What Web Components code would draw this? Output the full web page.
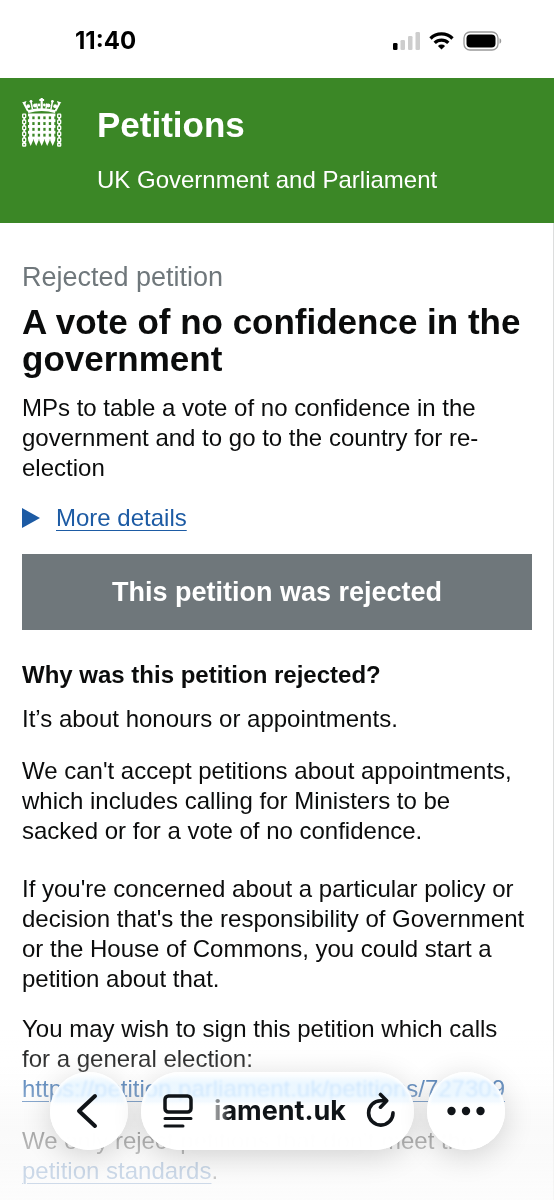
<!DOCTYPE html>
<html lang="en">
<head>
<meta charset="utf-8">
<meta name="viewport" content="width=device-width, initial-scale=1">
<title>A vote of no confidence in the government - Petitions</title>
<style>
  body {
    margin: 0;
    background: #fff;
    color: #0b0c0c;
    font: 24px/30px "Liberation Sans", Arial, sans-serif;
  }
</style>
</head>
<body>
<status-bar time="11:40"></status-bar>
<petition-header>
  <span slot="title">Petitions</span>
  <span slot="tagline">UK Government and Parliament</span>
</petition-header>
<petition-page>
  <span slot="status">Rejected petition</span>
  <span slot="title">A vote of no confidence in the government</span>
  <span slot="action">MPs to table a vote of no confidence in the government and to go to the country for re-election</span>
  <petition-details>More details</petition-details>
  <petition-banner>This petition was rejected</petition-banner>
  <rejection-reason></rejection-reason>
</petition-page>
<browser-toolbar><span>iament.uk</span></browser-toolbar>

<script>
class StatusBar extends HTMLElement {
    connectedCallback() {
        this.attachShadow({ mode: "open" }).innerHTML = `
        <style>
          :host {
            display: flex;
            align-items: center;
            justify-content: space-between;
            box-sizing: border-box;
            height: 78px;
            padding: 4px 52px 0 75px;
            color: #000;
            font: 700 24px/30px Inter, sans-serif;
          }
          .icons {
            display: flex;
            align-items: center;
            gap: 8px;
          }
          svg { display: block; }
        </style>
        <time>${this.getAttribute("time")}</time>
        <div class="icons">
          <svg width="29" height="18" viewBox="0 0 29 18" aria-label="Signal">
            <rect x="1" y="11" width="4.500" height="7" rx="1.300" fill="#000"/>
            <g fill="#cdcdcd">
              <rect x="8.500" y="8" width="4.500" height="10" rx="1.300"/>
              <rect x="16" y="4" width="4.500" height="14" rx="1.300"/>
              <rect x="23.500" y="0" width="4.500" height="18" rx="1.300"/>
            </g>
          </svg>
          <svg width="25" height="18" viewBox="0 0 25 18" fill="none" stroke="#000" stroke-width="3.300" aria-label="Wi-Fi">
            <path d="M1.500 6.500a15.500 15.500 0 0 1 22 0"/>
            <path d="M5.700 10.900a9.600 9.600 0 0 1 13.600 0"/>
            <path d="M12.500 17.500L8.900 13.900a5.200 5.200 0 0 1 7.200 0z" fill="#000" stroke="none"/>
          </svg>
          <svg width="40" height="20" viewBox="0 0 40 20" aria-label="Battery">
            <rect x="2" y="1" width="34" height="18" rx="6" fill="none" stroke="#999" stroke-width="1.300"/>
            <rect x="4.500" y="3.500" width="29" height="13" rx="4" fill="#000"/>
            <path d="M37.500 7.300c2.300.6 2.300 4.800 0 5.400z" fill="#999"/>
          </svg>
        </div>
        `;
    }
}

class PortcullisLogo extends HTMLElement {
    connectedCallback() {
        this.attachShadow({ mode: "open" }).innerHTML = `
        <style>
          :host { display: block; }
          svg { display: block; }
        </style>
        <svg width="40" height="49" viewBox="0 0 40 49" fill="none" stroke="#fff" role="img" aria-label="Portcullis">
          ${this._crown()}
          ${this._grille()}
          ${this._chain(2.2)}
          ${this._chain(37.2)}
        </svg>
        `;
    }
    _crown() {
        return `
          <path d="M6 13.700Q19.700 9.500 33.400 13.700" stroke-width="2.800"/>
          <path d="M6 13L1.800 5M33.400 13L37.600 5" stroke-width="1.900"/>
          <path d="M10.500 11.500L9 3.500M28.900 11.500L30.400 3.500" stroke-width="1.500"/>
          <path d="M15.500 10.800L14.500 5.500M23.900 10.800L24.900 5.500" stroke-width="1.500"/>
          <path d="M19.700 0v11" stroke-width="2.200"/>
          <path d="M17.300 2h4.800" stroke-width="2"/>
          <g fill="#fff" stroke="none">
            <path d="M0 4.500l4.500-1.500-1.500 4zM39.400 4.500l-4.500-1.500 1.500 4z"/>
            <circle cx="9" cy="3.300" r="1.400"/>
            <circle cx="30.400" cy="3.300" r="1.400"/>
            <circle cx="6.200" cy="8.200" r="1.900"/>
            <circle cx="33.200" cy="8.200" r="1.900"/>
            <circle cx="13" cy="7.500" r="2"/>
            <circle cx="26.400" cy="7.500" r="2"/>
            <circle cx="17" cy="7" r="1.400"/>
            <circle cx="22.400" cy="7" r="1.400"/>
          </g>`;
    }
    // five spiked uprights crossed by five bars
    _grille() {
        const uprights = [8.7, 14.2, 19.7, 25.2, 30.700].map(x =>
            `<path d="M${x - 1.6} 16h3.200v24l1 2-2.600 6-2.600-6 1-2z"/>`).join("");
        const bars = [15.5, 21.2, 27, 32.8, 38.6].map(y =>
            `<rect x="6" y="${y}" width="27.400" height="2.900"/>`).join("");
        return `<g fill="#fff" stroke="none">${uprights}${bars}</g>`;
    }
    _chain(x) {
        return [17.8, 23.8, 29.8, 35.8, 41.8].map(y =>
            `<rect x="${x - 1.5}" y="${y - 1.7}" width="3" height="3.600" rx=".6" stroke-width="1.300"/>
             <path d="M${x} ${y + 1.8}v2.600" stroke-width="1.900"/>`).join("")
            + `<rect x="${x - 1.5}" y="45" width="3" height="3" rx=".6" stroke-width="1.300"/>`;
    }
}

class PetitionHeader extends HTMLElement {
    connectedCallback() {
        this.attachShadow({ mode: "open" }).innerHTML = `
        <style>
          :host {
            display: block;
            background: #3b8726;
            color: #fff;
          }
          header {
            display: flex;
            align-items: flex-start;
            gap: 35px;
            padding: 20px 22px 28px;
          }
          .text { padding-top: 7px; }
          a {
            display: block;
            color: inherit;
            font-size: 35px;
            font-weight: 700;
            line-height: 40px;
            text-decoration: none;
          }
          p { margin: 20px 0 0; }
        </style>
        <header>
          <portcullis-logo></portcullis-logo>
          <div class="text">
            <a href="#"><slot name="title"></slot></a>
            <p><slot name="tagline"></slot></p>
          </div>
        </header>
        `;
    }
}

class PetitionPage extends HTMLElement {
    connectedCallback() {
        this.attachShadow({ mode: "open" }).innerHTML = `
        <style>
          :host {
            display: block;
            border-right: 1px solid #dcdddd;
          }
          main { padding: 38px 21px 14px 22px; }
          .status {
            margin: 0 0 10px;
            color: #6f777b;
            font-size: 27px;
            line-height: 32px;
          }
          h1 {
            margin: 0 0 16px;
            font-size: 35px;
            line-height: 37px;
          }
          .action { margin: 0 0 20px; }
        </style>
        <main>
          <p class="status"><slot name="status"></slot></p>
          <h1><slot name="title"></slot></h1>
          <p class="action"><slot name="action"></slot></p>
          <slot></slot>
        </main>
        `;
    }
}

class PetitionDetails extends HTMLElement {
    connectedCallback() {
        this.attachShadow({ mode: "open" }).innerHTML = `
        <style>
          :host {
            display: block;
            margin-bottom: 21px;
          }
          summary {
            display: flex;
            align-items: center;
            gap: 16px;
            color: #1d5ba4;
            cursor: pointer;
            list-style: none;
          }
          summary::before {
            content: "";
            width: 18px;
            height: 20px;
            background: currentColor;
            clip-path: polygon(0 0, 100% 50%, 0 100%);
          }
          summary span {
            text-decoration: underline;
            text-decoration-thickness: 1px;
            text-underline-offset: 4px;
          }
        </style>
        <details>
          <summary><span><slot></slot></span></summary>
        </details>
        `;
    }
}

class PetitionBanner extends HTMLElement {
    connectedCallback() {
        this.attachShadow({ mode: "open" }).innerHTML = `
        <style>
          :host {
            display: block;
            margin-bottom: 30px;
            padding: 22px 12px;
            background: #6f777b;
            color: #fff;
            font-size: 27px;
            font-weight: 700;
            line-height: 32px;
            text-align: center;
          }
        </style>
        <slot></slot>
        `;
    }
}

class RejectionReason extends HTMLElement {
    connectedCallback() {
        this.attachShadow({ mode: "open" }).innerHTML = `
        <style>
          :host { display: block; }
          h2 {
            margin: 0 0 14px;
            font-size: 24px;
            line-height: 30px;
          }
          p { margin: 0 0 22px; }
          .rules p { margin-bottom: 28px; }
          .rules p:last-child { margin-bottom: 20px; }
          p:last-child { margin-bottom: 0; }
          a {
            color: #1d5ba4;
            text-decoration-thickness: 1px;
            text-underline-offset: 4px;
          }
        </style>
        <h2>Why was this petition rejected?</h2>
        <p>It’s about honours or appointments.</p>
        <div class="rules">
          <p>We can't accept petitions about appointments, which includes calling for Ministers to be sacked or for a vote of no confidence.</p>
          <p>If you're concerned about a particular policy or decision that's the responsibility of Government or the House of Commons, you could start a petition about that.</p>
        </div>
        <p>You may wish to sign this petition which calls for a general election: <a href="#">https://petition.parliament.uk/petitions/727309</a></p>
        <p>We only reject petitions that don't meet the <a href="#">petition standards</a>.</p>
        `;
    }
}

class BrowserToolbar extends HTMLElement {
    connectedCallback() {
        this.attachShadow({ mode: "open" }).innerHTML = `
        <style>
          /* floats over the page, which fades out underneath */
          :host {
            position: fixed;
            inset: auto 0 0;
            display: block;
            padding: 42px 49px 50px 50px;
            background: linear-gradient(#fff0, #ffffff2e 20%, #fafafa70 38%, #f7f7f7a6 58%, #f9f9f9c4 75%, #fcfcfcd0);
            color: #101418;
            font: 700 27px/30px Inter, sans-serif;
          }
          nav {
            display: flex;
            gap: 13px;
          }
          .glass {
            box-sizing: border-box;
            height: 78px;
            border-radius: 39px;
            background: linear-gradient(#fffffff0, #e9f6ffd8 14%, #e9f6ffd8 30%, #fffffffa 44%, #fffffffa);
            backdrop-filter: blur(1px) saturate(2);
            box-shadow: 0 6px 30px #00000029, inset 0 0 3px 2px #fff;
          }
          button {
            display: grid;
            place-items: center;
            padding: 0;
            border: 0;
            background: none;
            color: inherit;
            font: inherit;
            cursor: pointer;
          }
          button.glass { width: 78px; }
          .address {
            display: flex;
            flex: 1;
            align-items: center;
            padding: 0 18px 0 22px;
          }
          .host {
            flex: 1;
            text-align: right;
            margin-right: 20px;
          }
          /* the start of a long address fades away */
          .host span {
            display: inline-block;
            -webkit-mask: linear-gradient(90deg, #0006, #0008 6px, #000 16px);
            mask: linear-gradient(90deg, #0006, #0008 6px, #000 16px);
          }
          svg {
            display: block;
            fill: none;
            stroke: currentColor;
            stroke-linecap: round;
            stroke-linejoin: round;
          }
          .dots {
            fill: currentColor;
            stroke: none;
          }
        </style>
        <nav>
          <button class="glass" aria-label="Back">
            <svg width="26" height="36" viewBox="0 0 26 36" stroke-width="4"><path d="M19 3L3 18l16 15"/></svg>
          </button>
          <div class="glass address">
            <button aria-label="Page menu">
              <svg width="30" height="34" viewBox="0 0 30 34" stroke-width="3.500">
                <rect x="2" y="2" width="26" height="16" rx="3.500"/>
                <path d="M2 24.500h26M2 32h18" stroke-width="3"/>
              </svg>
            </button>
            <div class="host"><span><slot></slot></span></div>
            <button aria-label="Reload">
              <svg width="30" height="38" viewBox="0 0 30 38" stroke-width="3.600">
                <path d="M18 8.700H14.700A12.200 12.200 0 1 0 27 20.900"/>
                <path d="M14.500 2.500l6.200 6.200-6.200 6.500"/>
              </svg>
            </button>
          </div>
          <button class="glass" aria-label="More">
            <svg class="dots" width="38" height="10" viewBox="0 0 38 10">
              <circle cx="4.500" cy="5" r="4.200"/><circle cx="19" cy="5" r="4.200"/><circle cx="33.500" cy="5" r="4.200"/>
            </svg>
          </button>
        </nav>
        `;
    }
}

window.customElements.define("status-bar", StatusBar);
window.customElements.define("portcullis-logo", PortcullisLogo);
window.customElements.define("petition-header", PetitionHeader);
window.customElements.define("petition-page", PetitionPage);
window.customElements.define("petition-details", PetitionDetails);
window.customElements.define("petition-banner", PetitionBanner);
window.customElements.define("rejection-reason", RejectionReason);
window.customElements.define("browser-toolbar", BrowserToolbar);
</script>
</body>
</html>
